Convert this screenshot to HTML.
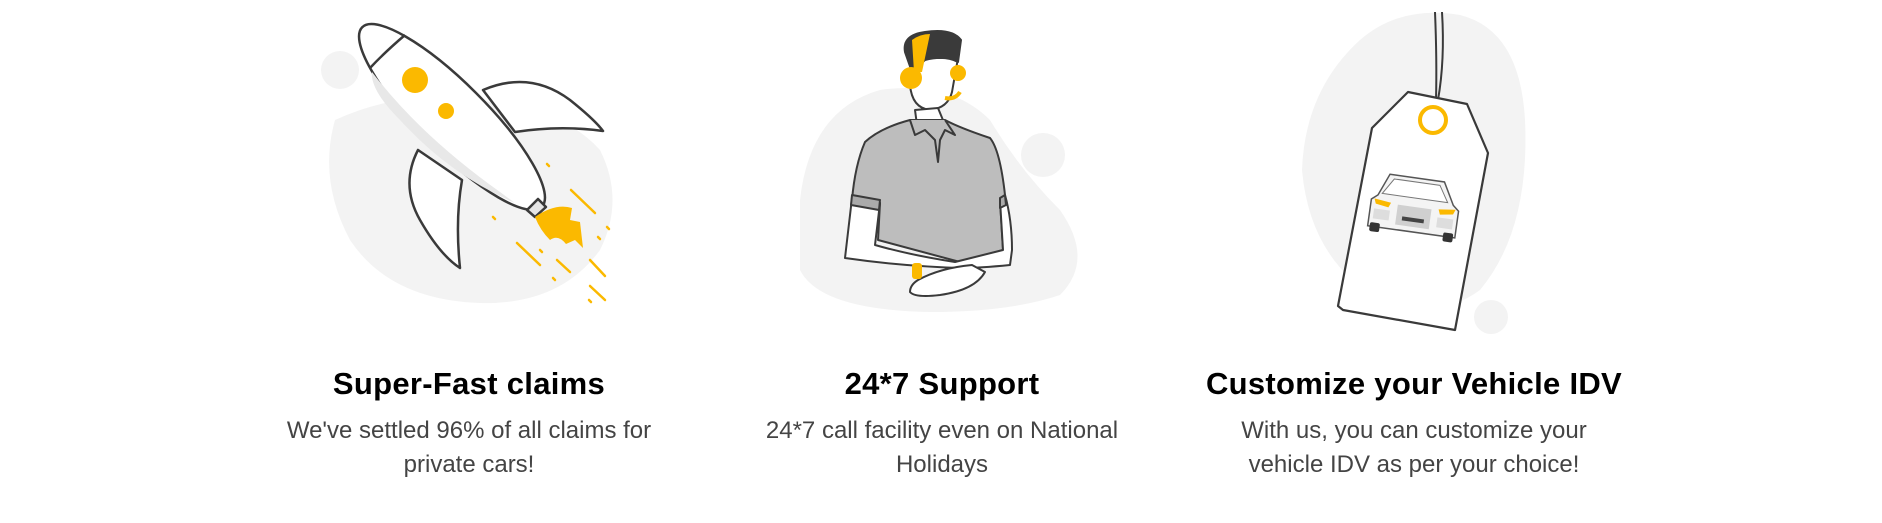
<!DOCTYPE html>
<html><head><meta charset="utf-8"><style>
html,body{margin:0;padding:0;background:#fff;width:1882px;height:523px;overflow:hidden;font-family:"Liberation Sans",sans-serif}
.t{position:absolute;top:366px;width:480px;text-align:center;font-weight:bold;font-size:31px;color:#000;letter-spacing:0.3px}
.d{position:absolute;top:414px;width:480px;text-align:center;font-size:24px;line-height:34px;color:#444}
svg{position:absolute;left:0;top:0}
</style></head><body>
<svg width="1882" height="340" viewBox="0 0 1882 340">
<g fill="#f3f3f3">
<circle cx="340" cy="70" r="19"/>
<path d="M335 120 Q400 90 470 100 Q560 105 600 150 Q625 200 600 250 Q560 305 480 303 Q390 300 350 240 Q318 180 335 120Z"/>
<path d="M800 200 Q810 110 880 90 Q950 80 990 120 Q1020 170 1060 210 Q1095 260 1060 295 Q1010 312 930 312 Q820 310 800 270Z"/>
<circle cx="1043" cy="155" r="22"/>
<path d="M1360 40 Q1400 5 1460 15 Q1520 30 1525 120 Q1530 230 1480 290 Q1440 320 1380 300 Q1310 260 1302 170 Q1305 90 1360 40Z"/>
<circle cx="1491" cy="317" r="17"/>
</g>
<!-- rocket -->
<g stroke="#3a3a3a" stroke-width="2.5" fill="#fff" stroke-linejoin="round">
<path d="M483 90 Q530 70 570 100 Q595 120 603 131 Q560 125 515 132Z"/>
<path d="M418 150 Q400 185 420 220 Q440 255 460 268 Q455 220 462 180Z"/>
<ellipse cx="452" cy="117" rx="127" ry="34" transform="rotate(45 452 117)"/>
<path d="M370 68 Q385 52 405 35" fill="none"/>
<path d="M527 210 L538 199 L546 207 L535 217Z" fill="#e5e5e5"/>
</g>
<path d="M372 72 Q420 135 500 192 L515 203 Q450 175 400 120 Q370 90 372 72Z" fill="#e8e8e8"/>
<circle cx="415" cy="80" r="13" fill="#fbb900"/>
<circle cx="446" cy="111" r="8" fill="#fbb900"/>
<path d="M535 217 Q555 203 572 208 L570 220 L580 222 L583 248 L575 240 L566 244 Q558 234 550 240 Q540 230 535 217Z" fill="#fbb900"/>
<g stroke="#fbb900" stroke-width="2.5" stroke-linecap="round">
<path d="M571 190 L595 213"/><path d="M517 243 L540 265"/><path d="M557 260 L570 272"/><path d="M590 260 L605 276"/><path d="M590 286 L605 300"/><path d="M547 164 L549 166"/><path d="M493 217 L495 219"/><path d="M540 250 L542 252"/><path d="M607 227 L609 229"/><path d="M598 237 L600 239"/><path d="M553 278 L555 280"/><path d="M589 300 L591 302"/>
</g>
<!-- person -->
<g stroke="#3a3a3a" stroke-width="2" stroke-linejoin="round">
<path d="M912 58 L910 85 Q912 108 930 110 Q948 108 952 92 L958 58Z" fill="#fff"/>
<path d="M915 110 L917 125 L945 125 L938 108Z" fill="#fff"/>
<path d="M905 52 Q902 35 925 32 Q952 28 961 40 L958 62 Q945 55 925 60 L912 72Z" fill="#3a3a3a"/>
<path d="M910 120 Q880 128 865 142 Q855 165 852 200 L880 203 L878 240 L960 262 L1003 250 L1000 200 L1005 195 Q1000 150 990 138 Q960 128 945 120Z" fill="#bdbdbd"/>
<path d="M852 198 L880 203 L875 245 Q910 255 955 262 L1003 250 L1000 200 L1005 195 Q1012 220 1012 250 L1010 265 Q980 268 960 268 Q900 266 845 258Z" fill="#fff"/>
<path d="M852 195 L880 200 L879 210 L851 205Z M1000 198 L1005 195 L1006 205 L1000 208Z" fill="#aaa"/>
<path d="M910 120 L915 135 L925 130 L935 140 L938 162 L940 140 L945 130 L955 135 L945 120" fill="#bdbdbd"/>
<path d="M918 280 Q940 268 972 265 L985 272 Q975 290 940 295 Q915 298 910 292 Q910 285 918 280Z" fill="#fff"/>
</g>
<path d="M912 40 Q920 34 930 34 L922 72 L914 72Z" fill="#fbb900"/>
<circle cx="911" cy="78" r="11" fill="#fbb900"/>
<circle cx="958" cy="73" r="8" fill="#fbb900"/>
<path d="M945 98 Q955 100 960 92" stroke="#fbb900" stroke-width="4" fill="none"/>
<rect x="912" y="263" width="10" height="16" rx="3" fill="#fbb900"/>
<!-- tag -->
<path d="M1435 12 Q1437 60 1436 100 M1442 12 Q1445 60 1438 100" stroke="#3a3a3a" stroke-width="2" fill="none"/>
<path d="M1408 92 L1467 104 L1488 153 L1455 330 L1343 310 L1338 306 L1372 128Z" fill="#fff" stroke="#3a3a3a" stroke-width="2.2" stroke-linejoin="round"/>
<circle cx="1433" cy="120" r="13" fill="none" stroke="#fbb900" stroke-width="4"/>
<g transform="rotate(8 1414 212)">
<path d="M1385 178 L1440 178 L1452 200 L1458 205 L1458 232 L1370 232 L1370 205 L1376 200Z" fill="#f4f4f4" stroke="#555" stroke-width="1.5"/>
<path d="M1390 182 L1436 182 L1446 198 L1380 198Z" fill="#fff" stroke="#777" stroke-width="1"/>
<rect x="1397" y="207" width="34" height="20" fill="#d0d0d0"/>
<rect x="1403" y="218" width="22" height="4" fill="#444"/>
<path d="M1373 204 L1390 206 L1388 211 L1375 209Z" fill="#fbb900"/>
<path d="M1438 206 L1455 204 L1453 209 L1440 211Z" fill="#fbb900"/>
<rect x="1372" y="228" width="10" height="9" rx="2" fill="#333"/>
<rect x="1446" y="228" width="10" height="9" rx="2" fill="#333"/>
<rect x="1374" y="214" width="16" height="10" fill="#ddd"/>
<rect x="1438" y="214" width="16" height="10" fill="#ddd"/>
</g>
</svg>
<div class="t" style="left:229px">Super-Fast claims</div>
<div class="d" style="left:229px">We've settled 96% of all claims for<br>private cars!</div>
<div class="t" style="left:702px">24*7 Support</div>
<div class="d" style="left:702px">24*7 call facility even on National<br>Holidays</div>
<div class="t" style="left:1174px">Customize your Vehicle IDV</div>
<div class="d" style="left:1174px">With us, you can customize your<br>vehicle IDV as per your choice!</div>
</body></html>
